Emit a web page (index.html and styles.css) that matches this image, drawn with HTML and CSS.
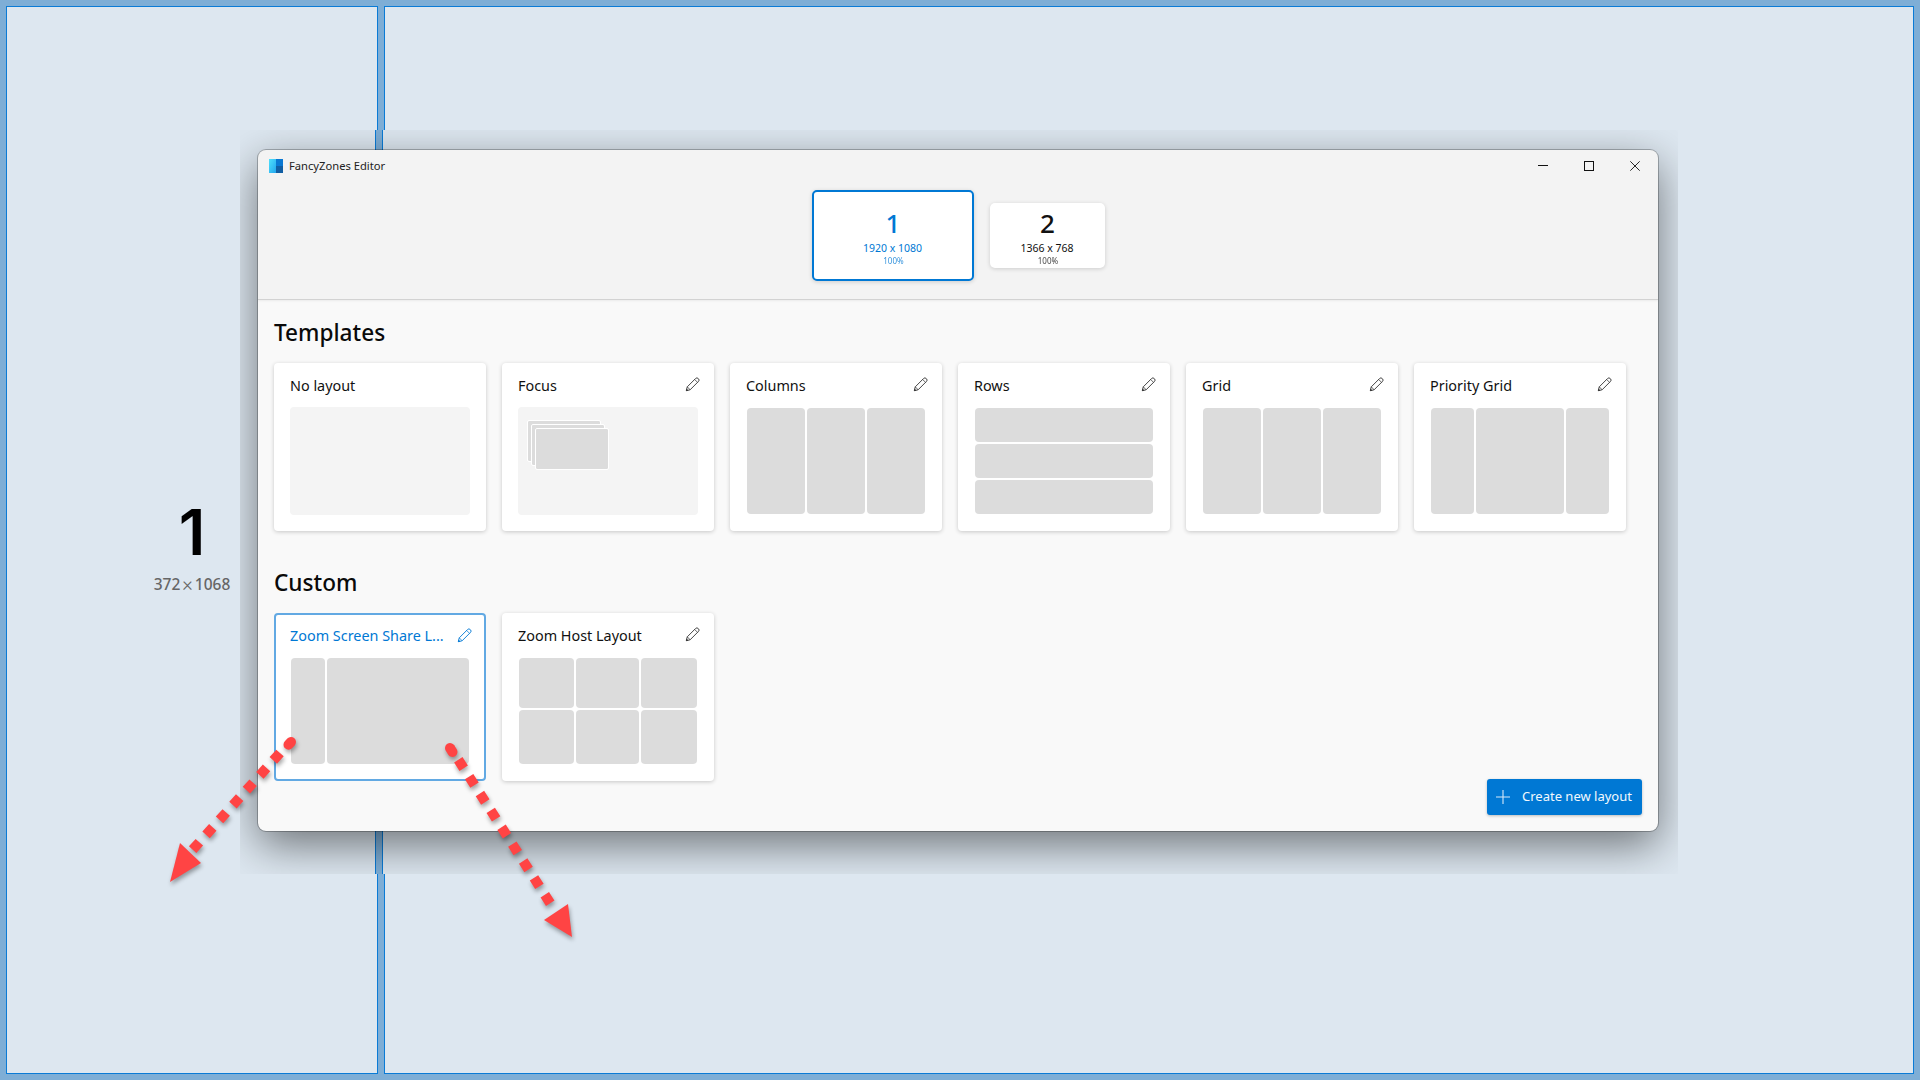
FILE: index.html
```html
<!DOCTYPE html>
<html lang="en">
<head>
<meta charset="utf-8">
<title>FancyZones Editor</title>
<link rel="stylesheet" href="styles.css">
</head>
<body>
<svg width="0" height="0" class="defs">
  <symbol id="pencil" viewBox="0 0 14 14">
    <path d="M1.2 12.8l.9-3.6L9.9 1.4a1.7 1.7 0 0 1 2.4 0l.3.3a1.7 1.7 0 0 1 0 2.4L4.8 11.9z" fill="none" stroke="currentColor" stroke-width=".85"/>
    <path d="M9 2.300l2.700 2.700M2.100 9.200l2.700 2.700" fill="none" stroke="currentColor" stroke-width=".7"/>
    <path d="M1 13l.5-2.200 1.700 1.700z" fill="currentColor"/>
  </symbol>
</svg>
<div class="desktop">
  <div class="zone zone-a">
    <div class="zone-num">1</div>
    <div class="zone-size">372<span class="times">×</span>1068</div>
  </div>
  <div class="zone"></div>
  <div class="halo">
    <div class="strip"></div>
    <div class="window">
      <header class="head">
        <div class="titlebar">
          <svg class="logo" width="14" height="14" viewBox="0 0 14 14">
            <defs><linearGradient id="lg" x1="0" y1="0" x2="1" y2="1"><stop offset="0" stop-color="#4fe0fb"/><stop offset="1" stop-color="#22a6ee"/></linearGradient></defs>
            <rect width="7" height="14" fill="url(#lg)"/>
            <rect x="7" width="7" height="7" fill="#0a78d2"/>
            <rect x="7" y="7" width="7" height="7" fill="#115ea3"/>
          </svg>
          <span class="apptitle">FancyZones Editor</span>
          <div class="controls">
            <svg width="10" height="10" viewBox="0 0 10 10"><path d="M0 4.500h10" stroke="#111" fill="none"/></svg>
            <svg width="10" height="10" viewBox="0 0 10 10"><rect x=".5" y=".5" width="9" height="9" stroke="#111" fill="none"/></svg>
            <svg width="10" height="10" viewBox="0 0 10 10"><path d="M.3.3l9.400 9.400M9.700.3L.3 9.700" stroke="#111" fill="none" stroke-width=".9"/></svg>
          </div>
        </div>
        <div class="monitors">
          <div class="monitor selected">
            <div class="mon-num">1</div>
            <div class="mon-res">1920 x 1080</div>
            <div class="mon-pct">100%</div>
          </div>
          <div class="monitor small">
            <div class="mon-num">2</div>
            <div class="mon-res">1366 x 768</div>
            <div class="mon-pct">100%</div>
          </div>
        </div>
      </header>
      <main class="body">
        <h2 class="section">Templates</h2>
        <div class="cards">
          <div class="card">
            <div class="card-head"><span class="card-title">No layout</span></div>
            <div class="preview"></div>
          </div>
          <div class="card">
            <div class="card-head"><span class="card-title">Focus</span><svg class="pen"><use href="#pencil"/></svg></div>
            <div class="preview">
              <div class="fz f1"></div><div class="fz f2"></div><div class="fz f3"></div>
            </div>
          </div>
          <div class="card">
            <div class="card-head"><span class="card-title">Columns</span><svg class="pen"><use href="#pencil"/></svg></div>
            <div class="zones cols3"><i></i><i></i><i></i></div>
          </div>
          <div class="card">
            <div class="card-head"><span class="card-title">Rows</span><svg class="pen"><use href="#pencil"/></svg></div>
            <div class="zones rows3"><i></i><i></i><i></i></div>
          </div>
          <div class="card">
            <div class="card-head"><span class="card-title">Grid</span><svg class="pen"><use href="#pencil"/></svg></div>
            <div class="zones cols3"><i></i><i></i><i></i></div>
          </div>
          <div class="card">
            <div class="card-head"><span class="card-title">Priority Grid</span><svg class="pen"><use href="#pencil"/></svg></div>
            <div class="zones prio"><i></i><i></i><i></i></div>
          </div>
        </div>
        <h2 class="section custom">Custom</h2>
        <div class="cards">
          <div class="card active">
            <div class="card-head"><span class="card-title">Zoom Screen Share L...</span><svg class="pen"><use href="#pencil"/></svg></div>
            <div class="zones share"><i></i><i></i></div>
          </div>
          <div class="card">
            <div class="card-head"><span class="card-title">Zoom Host Layout</span><svg class="pen"><use href="#pencil"/></svg></div>
            <div class="zones host"><i></i><i></i><i></i><i></i><i></i><i></i></div>
          </div>
        </div>
        <button class="create">
          <svg width="14" height="14" viewBox="0 0 14 14"><path d="M7 0v14M0 7h14" stroke="#d6e8f8" stroke-width="1.1" fill="none"/></svg>
          <span class="create-label">Create new layout</span>
        </button>
      </main>
    </div>
  </div>
  <svg class="arrows" width="1920" height="1080" viewBox="0 0 1920 1080">
    <g fill="#ff4444" stroke="none">
      <path d="M291 742l-2.500 2.700" stroke="#ff4444" stroke-width="10" stroke-linecap="round"/>
      <line x1="280" y1="753" x2="192.600" y2="849.700" stroke="#ff4444" stroke-width="10" stroke-dasharray="10 10.050"/>
      <polygon points="170,882 180,843 201,863"/>
      <path d="M450 748l2.500 4" stroke="#ff4444" stroke-width="10" stroke-linecap="round"/>
      <line x1="458.300" y1="759.800" x2="550.200" y2="903.200" stroke="#ff4444" stroke-width="10" stroke-dasharray="10 10.040"/>
      <polygon points="568,904 572,937 544,920"/>
    </g>
  </svg>
</div>
</body>
</html>
```
FILE: styles.css
```css
* { box-sizing: border-box; }
html, body { margin: 0; padding: 0; }
body { width: 1920px; height: 1080px; overflow: hidden; font-family: "Noto Sans", "Open Sans", sans-serif; color: #111; }
.defs { position: absolute; }

.desktop {
  position: relative;
  width: 1920px;
  height: 1080px;
  background: #7eaed6;
  padding: 6px;
  display: grid;
  grid-template-columns: 372px 1530px;
  column-gap: 6px;
}
.zone { background: #dde7f0; border: 1px solid #0a7bd6; }
.zone-a {
  display: flex;
  flex-direction: column;
  align-items: center;
  padding-top: 496px;
}
.zone-num { font-family: "Inter", "Noto Sans", sans-serif; font-size: 63px; line-height: 58px; font-weight: 600; color: #000; }
.zone-size { font-size: 15.5px; line-height: 20px; font-weight: 500; color: #666; margin-top: 13px; white-space: nowrap; }
.times { font-family: "Roboto", sans-serif; font-weight: 300; font-size: 20px; line-height: 14px; padding: 0 2px; vertical-align: -1px; }

.halo {
  position: absolute;
  left: 240px;
  top: 130px;
  width: 1438px;
  height: 744px;
  background: #dde7f0;
  overflow: hidden;
}
.strip {
  position: absolute;
  left: 135px;
  top: 0;
  width: 8px;
  height: 100%;
  background: #7eaed6;
  border-left: 1px solid #0a7bd6;
  border-right: 1px solid #0a7bd6;
}
.window {
  position: absolute;
  left: 18px;
  top: 20px;
  width: 1400px;
  height: 681px;
  border-radius: 8px;
  background: #f9f9f9;
  overflow: hidden;
  display: flex;
  flex-direction: column;
}
.halo::after {
  content: "";
  position: absolute;
  left: 18px;
  top: 20px;
  width: 1400px;
  height: 681px;
  border-radius: 8px;
  box-shadow: 0 14px 44px rgba(0,0,0,.5), 0 0 0 1px rgba(0,0,0,.25);
  pointer-events: none;
}

.head {
  height: 150px;
  background: #f3f3f3;
  border-bottom: 1px solid #d2d2d2;
  box-shadow: 0 1px 2px rgba(0,0,0,.06);
  flex: none;
}
.titlebar { height: 32px; display: flex; align-items: center; padding-left: 11px; }
.logo { flex: none; }
.apptitle { font-size: 11.2px; margin-left: 6px; margin-top: -2px; color: #222; }
.controls { margin-left: auto; display: flex; gap: 36px; padding-right: 18px; }
.controls svg { display: block; }

.monitors { height: 107px; display: flex; justify-content: center; align-items: center; gap: 16px; }
.monitor {
  width: 162px;
  height: 91px;
  background: #fff;
  border: 2px solid #0078d4;
  border-radius: 5px;
  color: #0078d4;
  display: flex;
  flex-direction: column;
  align-items: center;
  justify-content: center;
  box-shadow: 0 1px 4px rgba(0,0,0,.16);
  padding-top: 4px;
}
.monitor.small { width: 115px; height: 65px; border: 0; color: #111; }
.mon-num { font-size: 26px; line-height: 28px; font-weight: 500; padding-left: 1px; }
.mon-res { font-size: 10.5px; line-height: 14px; margin-top: 4px; }
.mon-pct { font-size: 8px; line-height: 10px; margin-top: 1.5px; opacity: .8; padding-left: 2px; }

.body { position: relative; flex: 1; padding: 0 16px; }
.section { margin: 0; font-size: 22.6px; line-height: 32px; font-weight: 500; color: #0a0a0a; padding-top: 17px; height: 63px; }
.section.custom { height: 46px; padding-top: 0; margin-top: 36px; }
.cards { display: flex; gap: 16px; }
.card {
  width: 212px;
  height: 168px;
  background: #fff;
  border-radius: 4px;
  box-shadow: 0 1px 4px rgba(0,0,0,.2);
  padding: 0 16px;
  flex: none;
}
.card.active { border: 2px solid #62a9e3; padding: 0 14px; box-shadow: none; }
.card.active .card-head { height: 42px; padding-top: 0; }
.card.active .card-title, .card.active .pen { color: #0078d4; }
.card-head { height: 44px; display: flex; align-items: center; justify-content: space-between; padding-top: 1px; }
.card-title { font-size: 14.4px; line-height: 18px; color: #111; white-space: nowrap; }
.pen { width: 15px; height: 15px; margin-right: -2px; color: #333; flex: none; margin-top: -2px; }

.preview { position: relative; height: 108px; background: #f4f4f4; border-radius: 4px; }
.fz { position: absolute; width: 72px; height: 40px; background: #dcdcdc; border-radius: 1px; outline: 1px solid #fff; }
.f1 { left: 10px; top: 14px; }
.f2 { left: 14px; top: 18px; }
.f3 { left: 18px; top: 22px; }

.zones { height: 108px; padding: 1px; display: grid; gap: 2px; }
.zones i { display: block; background: #dcdcdc; border-radius: 4px; }
.cols3 { grid-template-columns: repeat(3, 1fr); }
.rows3 { grid-template-rows: repeat(3, 1fr); }
.prio { grid-template-columns: 43px 88px 43px; }
.share { grid-template-columns: 34px 142px; }
.host { grid-template-columns: 55px 63px 56px; grid-template-rows: 50px 54px; }

.create {
  position: absolute;
  right: 16px;
  bottom: 16px;
  width: 155px;
  height: 36px;
  padding: 0 0 0 9px;
  border: 0;
  border-radius: 3px;
  background: #0078d4;
  color: #f2f8fd;
  font: inherit;
  font-size: 13px;
  display: flex;
  align-items: center;
  gap: 12px;
  box-shadow: 0 1px 3px rgba(0,0,0,.25);
}
.create-label { margin-top: -2px; }

.arrows { position: absolute; left: 0; top: 0; filter: drop-shadow(1px 3px 2px rgba(0,0,0,.35)); pointer-events: none; }
```
